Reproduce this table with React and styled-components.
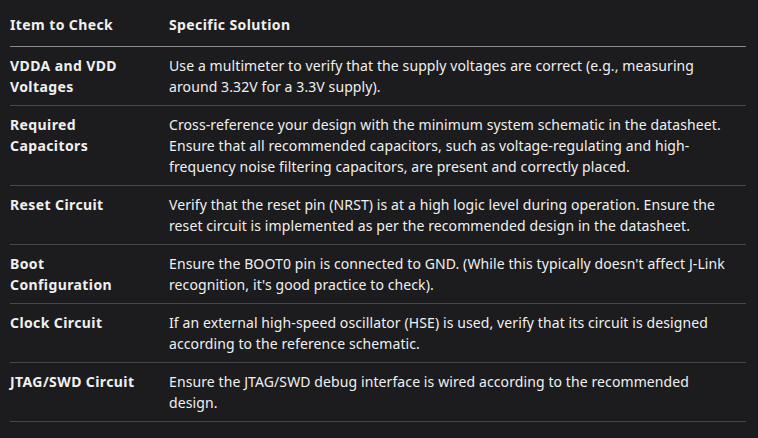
import React from 'react';
import styled, { createGlobalStyle } from 'styled-components';

const GlobalStyle = createGlobalStyle`
  html, body {
    margin: 0;
    background: #1c1c1e;
  }
  body {
    font-family: "Noto Sans", "Open Sans", sans-serif;
    color: #f0f0f0;
  }
`;

const Page = styled.div`
  padding: 5px 12px 0 10px;
  width: 758px;
  height: 438px;
  box-sizing: border-box;
`;

const Table = styled.table`
  width: 736px;
  table-layout: fixed;
  border-collapse: collapse;
  font-size: 14px;
  line-height: 21px;
`;

const HeadCell = styled.th`
  box-sizing: border-box;
  text-align: left;
  font-weight: 700;
  letter-spacing: 0.4px;
  padding: 9px 24px 11px 0;
  border-bottom: 1px solid #8a8a8c;
  width: ${(p) => p.$width || 'auto'};
`;

const Row = styled.tr`
  border-bottom: 1px solid #48474c;
`;

const Cell = styled.td`
  box-sizing: border-box;
  vertical-align: top;
  padding: 8px 12px 8px 0;
  font-weight: ${(p) => (p.$bold ? 700 : 400)};
  letter-spacing: ${(p) => (p.$bold ? '0.4px' : '0.1px')};
  padding-right: ${(p) => (p.$bold ? '24px' : '8px')};
`;

const rows = [
  ['VDDA and VDD Voltages', 'Use a multimeter to verify that the supply voltages are correct (e.g., measuring around 3.32V for a 3.3V supply).'],
  ['Required Capacitors', 'Cross-reference your design with the minimum system schematic in the datasheet. Ensure that all recommended capacitors, such as voltage-regulating and high-frequency noise filtering capacitors, are present and correctly placed.'],
  ['Reset Circuit', 'Verify that the reset pin (NRST) is at a high logic level during operation. Ensure the reset circuit is implemented as per the recommended design in the datasheet.'],
  ['Boot Configuration', "Ensure the BOOT0 pin is connected to GND. (While this typically doesn't affect J\u2011Link recognition, it's good practice to check)."],
  ['Clock Circuit', 'If an external high-speed oscillator (HSE) is used, verify that its circuit is designed according to the reference schematic.'],
  ['JTAG/SWD Circuit', 'Ensure the JTAG/SWD debug interface is wired according to the recommended design.'],
];

export default function App() {
  return (
    <Page>
      <GlobalStyle />
      <Table>
        <thead>
          <tr>
            <HeadCell $width="159px">Item to Check</HeadCell>
            <HeadCell>Specific Solution</HeadCell>
          </tr>
        </thead>
        <tbody>
          {rows.map(([item, solution]) => (
            <Row key={item}>
              <Cell $bold>{item}</Cell>
              <Cell>{solution}</Cell>
            </Row>
          ))}
        </tbody>
      </Table>
    </Page>
  );
}
